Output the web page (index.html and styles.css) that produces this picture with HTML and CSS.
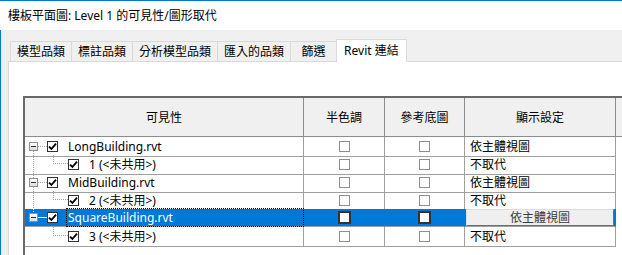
FILE: index.html
```html
<!DOCTYPE html>
<html lang="zh-Hant">
  <head>
    <meta charset="UTF-8" />
    <meta name="viewport" content="width=device-width, initial-scale=1.0" />
    <title>可見性/圖形取代</title>
    <link rel="stylesheet" href="styles.css">
  </head>
  <body>
    <div class="window">
      <div class="titlebar">樓板平面圖: Level 1 的可見性/圖形取代</div>
      <div class="main">
        <div class="tabs">
          <div class="tab">模型品類</div>
          <div class="tab">標註品類</div>
          <div class="tab">分析模型品類</div>
          <div class="tab">匯入的品類</div>
          <div class="tab">篩選</div>
          <div class="tab tab-active">Revit 連結</div>
        </div>
        <div class="panel">
          <div class="grid">
            <div class="row head">
              <div>可見性</div>
              <div>半色調</div>
              <div>參考底圖</div>
              <div>顯示設定</div>
              <div></div>
            </div>

            <div class="row">
              <div class="name line-down">
                <span class="exp"></span><span class="hl"></span>
                <span class="chk"><svg width="9" height="9" viewBox="0 0 9 9"><path d="M1 4.6 L3.4 7 L8 1.6" fill="none" stroke="#000" stroke-width="1.8"/></svg></span>
                <span class="label">LongBuilding.rvt</span>
              </div>
              <div class="mid"><span class="box"></span></div>
              <div class="mid"><span class="box"></span></div>
              <div class="setting">依主體視圖</div>
              <div></div>
            </div>
            <div class="row">
              <div class="name child line-full">
                <span class="elbow"></span>
                <span class="chk"><svg width="9" height="9" viewBox="0 0 9 9"><path d="M1 4.6 L3.4 7 L8 1.6" fill="none" stroke="#000" stroke-width="1.8"/></svg></span>
                <span class="label">1 (&lt;未共用&gt;)</span>
              </div>
              <div class="mid"><span class="box"></span></div>
              <div class="mid"><span class="box"></span></div>
              <div class="setting">不取代</div>
              <div></div>
            </div>

            <div class="row">
              <div class="name line-full">
                <span class="exp"></span><span class="hl"></span>
                <span class="chk"><svg width="9" height="9" viewBox="0 0 9 9"><path d="M1 4.6 L3.4 7 L8 1.6" fill="none" stroke="#000" stroke-width="1.8"/></svg></span>
                <span class="label">MidBuilding.rvt</span>
              </div>
              <div class="mid"><span class="box"></span></div>
              <div class="mid"><span class="box"></span></div>
              <div class="setting">依主體視圖</div>
              <div></div>
            </div>
            <div class="row">
              <div class="name child line-full">
                <span class="elbow"></span>
                <span class="chk"><svg width="9" height="9" viewBox="0 0 9 9"><path d="M1 4.6 L3.4 7 L8 1.6" fill="none" stroke="#000" stroke-width="1.8"/></svg></span>
                <span class="label">2 (&lt;未共用&gt;)</span>
              </div>
              <div class="mid"><span class="box"></span></div>
              <div class="mid"><span class="box"></span></div>
              <div class="setting">不取代</div>
              <div></div>
            </div>

            <div class="row sel">
              <div class="name line-up">
                <span class="exp"></span><span class="hl"></span>
                <span class="chk"><svg width="9" height="9" viewBox="0 0 9 9"><path d="M1 4.6 L3.4 7 L8 1.6" fill="none" stroke="#000" stroke-width="1.8"/></svg></span>
                <span class="label">SquareBuilding.rvt</span>
              </div>
              <div class="mid"><span class="box box-sel"></span></div>
              <div class="mid"><span class="box box-sel"></span></div>
              <div class="setting btn-cell"><span class="combo">依主體視圖</span></div>
              <div></div>
            </div>
            <div class="row">
              <div class="name child">
                <span class="elbow"></span>
                <span class="chk"><svg width="9" height="9" viewBox="0 0 9 9"><path d="M1 4.6 L3.4 7 L8 1.6" fill="none" stroke="#000" stroke-width="1.8"/></svg></span>
                <span class="label">3 (&lt;未共用&gt;)</span>
              </div>
              <div class="mid"><span class="box"></span></div>
              <div class="mid"><span class="box"></span></div>
              <div class="setting">不取代</div>
              <div></div>
            </div>
          </div>
        </div>
      </div>
    </div>
  </body>
</html>
```

FILE: styles.css
```css
* {
  margin: 0;
  padding: 0;
  box-sizing: border-box;
}

html,
body {
  height: 100%;
  overflow: hidden;
}

body {
  font-family: "Noto Sans", "Noto Sans CJK TC", sans-serif;
  font-size: 12px;
  color: #000;
  background: #fff;
}

.window {
  height: 100vh;
  display: flex;
  flex-direction: column;
  border-top: 1px solid #0078d7;
}

.titlebar {
  height: 29px;
  line-height: 29px;
  padding-left: 8px;
  flex-shrink: 0;
}

.main {
  flex: 1;
  display: flex;
  flex-direction: column;
  background: #f0f0f0;
  border-left: 1px solid #0078d7;
  padding-top: 9px;
}

.tabs {
  display: flex;
  align-items: flex-end;
  height: 22px;
  padding-left: 9px;
  flex-shrink: 0;
}

.tab {
  height: 20px;
  line-height: 19px;
  padding: 0 6px;
  min-width: 47px;
  text-align: center;
  border: 1px solid #d9d9d9;
  border-bottom: none;
  margin-left: -1px;
  background: #f0f0f0;
}

.tab:first-child {
  margin-left: 0;
}

.tab-active {
  height: 23px;
  line-height: 21px;
  margin-bottom: -1px;
  padding: 0 7px;
  background: #fff;
  position: relative;
  z-index: 1;
}

.panel {
  flex: 1;
  display: flex;
  flex-direction: column;
  margin-left: 7px;
  background: #fff;
  border-left: 1px solid #d9d9d9;
  border-top: 1px solid #d9d9d9;
  padding: 34px 0 0 14px;
}

.grid {
  flex: 1;
  border-left: 2px solid #696969;
  border-top: 2px solid #696969;
  background: #fff;
}

.row {
  display: grid;
  grid-template-columns: 279px 81px 80px 151px 1fr;
  height: 18px;
}

.row > div {
  display: flex;
  align-items: center;
  border-right: 1px solid #a0a0a0;
  border-bottom: 1px solid #a0a0a0;
  line-height: 17px;
  white-space: nowrap;
}

.row > div:last-child {
  border-right: none;
  border-bottom: none;
}

.head {
  height: 39px;
}

.head > div {
  justify-content: center;
  background: #f0f0f0;
  border-color: #8c8c8c;
}

.head > div:last-child {
  border-bottom: 1px solid #8c8c8c;
}

/* tree column */
.name {
  padding-left: 4px;
  background-repeat: no-repeat;
}

.line-down,
.line-full,
.line-up {
  background-image: repeating-linear-gradient(to bottom, #a0a0a0 0 1px, transparent 1px 2px);
}

.line-down {
  background-position: 8px 8px;
  background-size: 1px 10px;
}

.line-full {
  background-position: 8px 0;
  background-size: 1px 100%;
}

.line-up {
  background-position: 8px 0;
  background-size: 1px 9px;
}

.exp {
  width: 9px;
  height: 9px;
  flex-shrink: 0;
  display: flex;
  align-items: center;
  justify-content: center;
  border: 1px solid #919191;
  background: linear-gradient(#fff, #dcdcdc);
}

.exp::after {
  content: "";
  width: 5px;
  height: 1px;
  background: #2b2b2b;
}

.hl {
  width: 9px;
  border-top: 1px dotted #a0a0a0;
}

.child {
  padding-left: 28px;
}

.elbow {
  width: 15px;
  height: 9px;
  align-self: flex-start;
  border-left: 1px dotted #a0a0a0;
  border-bottom: 1px dotted #a0a0a0;
}

.chk {
  width: 11px;
  height: 11px;
  flex-shrink: 0;
  display: flex;
  align-items: center;
  justify-content: center;
  border: 1px solid #333;
  background: #fff;
}

.label {
  flex: 1;
  align-self: stretch;
  display: flex;
  align-items: center;
  margin-left: 8px;
  padding-left: 1px;
  border: 1px dotted transparent;
}

/* checkbox columns */
.mid {
  justify-content: center;
}

.box {
  width: 11px;
  height: 11px;
  border: 1px solid #8e8e8e;
}

.box-sel {
  width: 13px;
  height: 13px;
  border: 2px solid #333;
  background: #fff;
}

.setting {
  padding-left: 5px;
}

.btn-cell {
  padding: 0 1px;
  align-items: stretch;
}

.combo {
  flex: 1;
  text-align: center;
  line-height: 15px;
  color: #3c3c3c;
  background: #efefef;
  border: 1px solid;
  border-color: #dcdcdc #6d6d6d #6d6d6d #dcdcdc;
}

/* selected row */
.sel > div:not(:last-child) {
  background-color: #0078d7;
  border-right-color: #0078d7;
  color: #fff;
}

.sel .line-up {
  background-image: repeating-linear-gradient(to bottom, #fff 0 1px, transparent 1px 2px);
}

.sel .hl {
  border-top: 1px solid #fff;
}

.sel .label {
  margin: -1px -1px -1px 8px;
  border-color: #000;
}
```
